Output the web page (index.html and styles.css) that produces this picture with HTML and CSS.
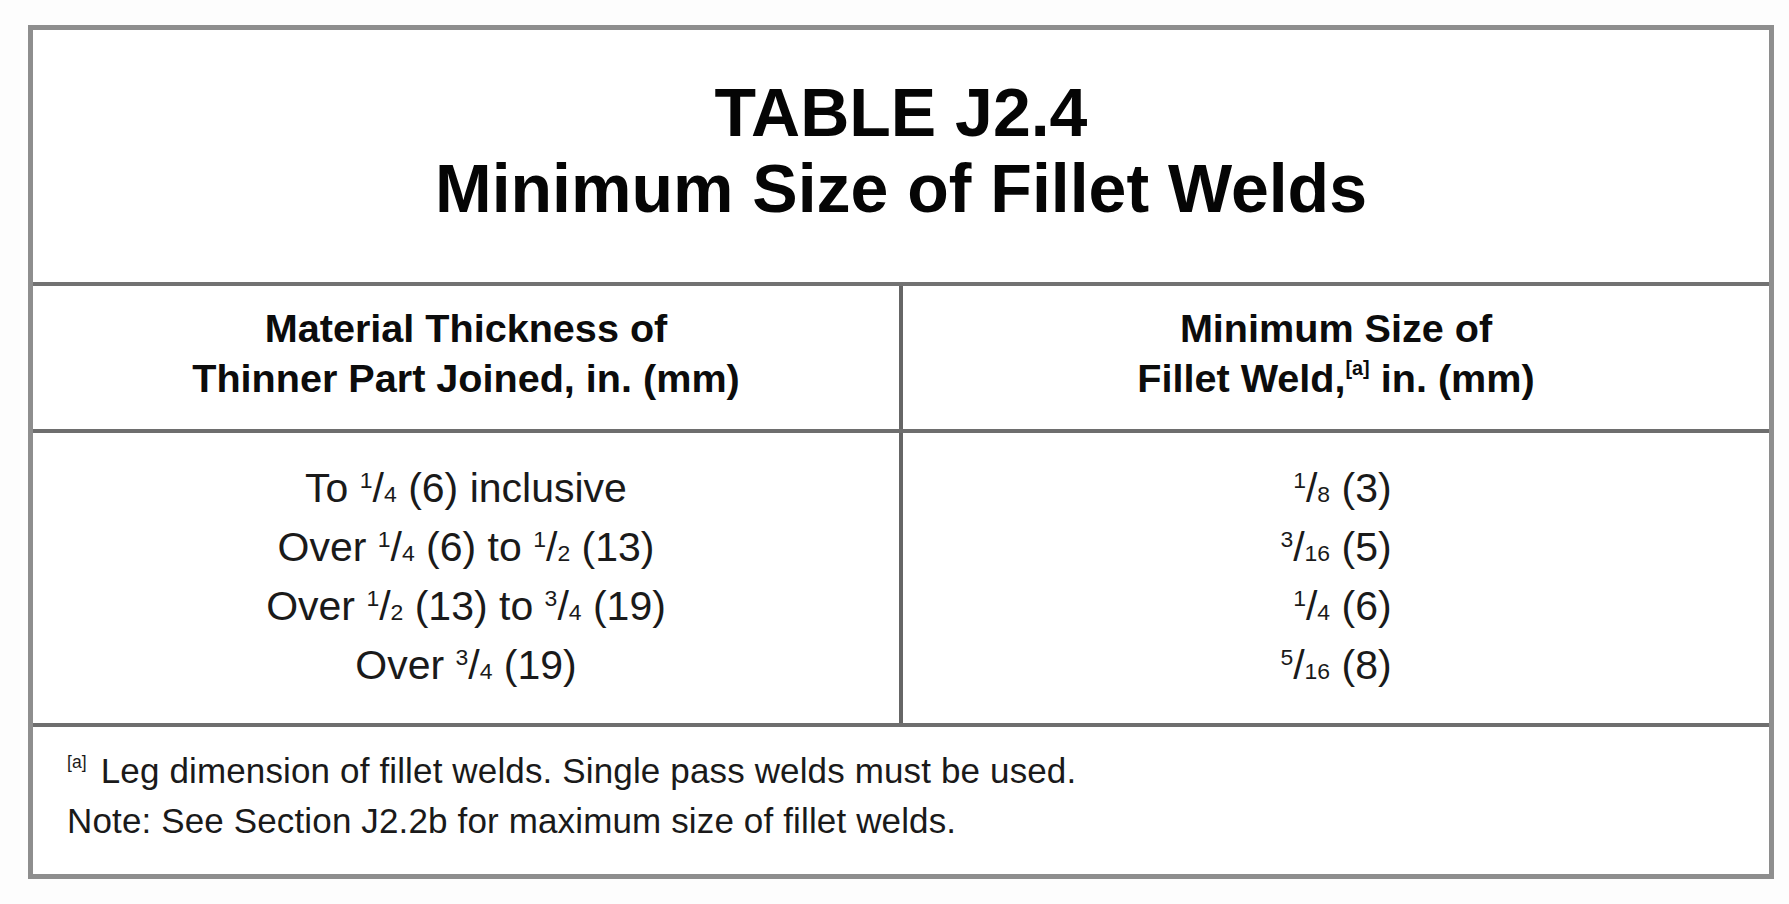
FILE: index.html
```html
<!DOCTYPE html>
<html lang="en">
<head>
<meta charset="utf-8">
<title>Table J2.4 Minimum Size of Fillet Welds</title>
<link rel="stylesheet" href="styles.css">
</head>
<body>
<div class="sheet">
  <div class="title">
    <div class="title-line">TABLE J2.4</div>
    <div class="title-line">Minimum Size of Fillet Welds</div>
  </div>
  <div class="cols head">
    <div class="cell first">
      <div class="hline">Material Thickness of</div>
      <div class="hline">Thinner Part Joined, in. (mm)</div>
    </div>
    <div class="cell">
      <div class="hline">Minimum Size of</div>
      <div class="hline">Fillet Weld,<sup class="note">[a]</sup> in. (mm)</div>
    </div>
  </div>
  <div class="cols body">
    <div class="cell first">
      <div class="dline">To <span class="fr"><sup>1</sup>/<sub>4</sub></span> (6) inclusive</div>
      <div class="dline">Over <span class="fr"><sup>1</sup>/<sub>4</sub></span> (6) to <span class="fr"><sup>1</sup>/<sub>2</sub></span> (13)</div>
      <div class="dline">Over <span class="fr"><sup>1</sup>/<sub>2</sub></span> (13) to <span class="fr"><sup>3</sup>/<sub>4</sub></span> (19)</div>
      <div class="dline">Over <span class="fr"><sup>3</sup>/<sub>4</sub></span> (19)</div>
    </div>
    <div class="cell">
      <div class="vals">
        <div class="dline"><span class="fr"><sup>1</sup>/<sub>8</sub></span> (3)</div>
        <div class="dline"><span class="fr"><sup>3</sup>/<sub>16</sub></span> (5)</div>
        <div class="dline"><span class="fr"><sup>1</sup>/<sub>4</sub></span> (6)</div>
        <div class="dline"><span class="fr"><sup>5</sup>/<sub>16</sub></span> (8)</div>
      </div>
    </div>
  </div>
  <div class="foot">
    <div class="fline"><sup class="fnote">[a]</sup> Leg dimension of fillet welds. Single pass welds must be used.</div>
    <div class="fline">Note: See Section J2.2b for maximum size of fillet welds.</div>
  </div>
</div>
</body>
</html>
```
FILE: styles.css
```css
html, body {
  margin: 0;
  padding: 0;
  background: #fdfdfd;
}

body {
  font-family: "Liberation Sans", Arial, Helvetica, sans-serif;
  color: #111;
  padding: 25px 0 0 28px;
}

.sheet {
  box-sizing: border-box;
  width: 1746px;
  border: 5px solid #8e8e8e;
  background: #fff;
}

.title {
  padding: 44px 0 56px;
  text-align: center;
  border-bottom: 4px solid #727272;
}

.title-line {
  font-size: 68px;
  line-height: 76px;
  font-weight: 700;
  color: #050505;
}

.cols {
  display: grid;
  grid-template-columns: 870px 1fr;
}

.cell {
  box-sizing: border-box;
  text-align: center;
}

.cell.first {
  border-right: 4px solid #666;
}

.head {
  border-bottom: 4px solid #6e6e6e;
}

.head .cell {
  padding: 17px 0 26px;
}

.hline {
  font-size: 39.6px;
  line-height: 50px;
  font-weight: 700;
  color: #0c0c0c;
}

.note {
  font-size: 0.5em;
  line-height: 0;
  vertical-align: 0.85em;
  font-weight: 700;
}

.body {
  border-bottom: 4px solid #6e6e6e;
}

.body .cell {
  padding: 26px 0 28px;
}

.dline {
  font-size: 41px;
  line-height: 59px;
  color: #1a1a1a;
}

.vals {
  display: inline-block;
  text-align: right;
}

.fr sup,
.fr sub {
  font-size: 0.56em;
  line-height: 0;
}

.fr sup {
  vertical-align: 0.62em;
}

.fr sub {
  vertical-align: 0;
}

.foot {
  padding: 19px 0 28px 34px;
}

.fline {
  font-size: 35px;
  line-height: 50px;
  letter-spacing: 0.14px;
  color: #1a1a1a;
}

.fnote {
  font-size: 0.5em;
  line-height: 0;
  vertical-align: 0.85em;
  margin-right: 4px;
}
```
